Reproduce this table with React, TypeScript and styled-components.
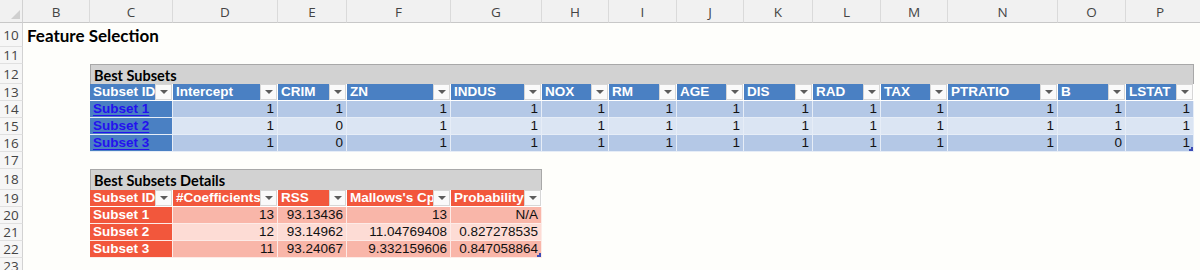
import React from 'react';
import styled, { createGlobalStyle } from 'styled-components';

// Sheet column widths: row numbers, B..P, rest
const COLS = '23px 67px 83px 105px 69px 104px 91px 67px 68px 67px 69px 68px 67px 110px 68px 68px 1fr';
const LETTERS = ['B', 'C', 'D', 'E', 'F', 'G', 'H', 'I', 'J', 'K', 'L', 'M', 'N', 'O', 'P'];

const GlobalStyle = createGlobalStyle`
  html, body {
    margin: 0;
    padding: 0;
    background: #fefefb;
  }
  * {
    box-sizing: border-box;
  }
`;

const Sheet = styled.div`
  width: 1200px;
  height: 270px;
  overflow: hidden;
  background: #fefefb;
  font-family: 'Liberation Sans', Arial, sans-serif;
`;

const SheetRow = styled.div<{ $h: number }>`
  display: grid;
  grid-template-columns: ${COLS};
  height: ${p => p.$h}px;
`;

const Corner = styled.div`
  background: #f1f1f1;
  border-right: 1px solid #d2d2d2;
  border-bottom: 1px solid #c8c8c8;
  display: flex;
  justify-content: flex-end;
  align-items: flex-end;
  padding: 0 2px 3px 0;
`;

const CornerMark = styled.div`
  width: 0;
  height: 0;
  border-left: 9px solid transparent;
  border-bottom: 9px solid #cfcfcf;
`;

const ColLetter = styled.div<{ $last?: boolean }>`
  background: #f1f1f1;
  border-right: ${p => (p.$last ? 'none' : '1px solid #dadada')};
  border-bottom: 1px solid #c8c8c8;
  color: #444;
  font-family: 'Open Sans', 'Liberation Sans', sans-serif;
  font-size: 13.5px;
  display: flex;
  align-items: center;
  justify-content: center;
  padding-top: 1px;
`;

const RowNum = styled.div`
  background: #f6f6f6;
  border-right: 1px solid #d2d2d2;
  border-bottom: 1px solid #e0e0e0;
  color: #444;
  font-family: 'Open Sans', 'Liberation Sans', sans-serif;
  font-size: 13.5px;
  display: flex;
  align-items: center;
  justify-content: center;
  overflow: hidden;
`;

const Gap = styled.div``;

const Title = styled.div`
  grid-column: span 6;
  font-family: Lato, 'Open Sans', sans-serif;
  font-weight: 700;
  font-size: 17px;
  color: #000;
  padding: 2px 0 0 4px;
  white-space: nowrap;
`;

const Caption = styled.div<{ $span: number }>`
  grid-column: span ${p => p.$span};
  background: #d2d2d2;
  border: 1px solid #a8a8a8;
  border-bottom: none;
  font-family: Lato, 'Open Sans', sans-serif;
  font-weight: 700;
  font-size: 14.5px;
  color: #000;
  padding: 2px 0 0 3px;
  white-space: nowrap;
`;

type Theme = 'blue' | 'red';

const palette = {
  blue: { head: '#4a80c3', dark: '#b4c8e6', light: '#dbe5f3', line: '#e6edf7' },
  red: { head: '#f2573c', dark: '#f9b6a9', light: '#fddcd5', line: '#fdebe7' },
};

const HeadCell = styled.div<{ $t: Theme }>`
  display: flex;
  align-items: stretch;
  background: ${p => palette[p.$t].head};
  border-right: 1px solid #fff;
  border-bottom: 1px solid #fff;
  overflow: hidden;
`;

const HeadLabel = styled.span`
  flex: 1;
  min-width: 0;
  overflow: hidden;
  white-space: nowrap;
  color: #fff;
  font-weight: 700;
  font-size: 13.5px;
  line-height: 16px;
  padding-left: 3px;
`;

const DropButton = styled.span`
  flex: 0 0 17px;
  background: #fafafa;
  border: 1px solid #d6d6d6;
  display: flex;
  align-items: center;
  justify-content: center;

  &::after {
    content: '';
    border-left: 4px solid transparent;
    border-right: 4px solid transparent;
    border-top: 4px solid #5c5c5c;
  }
`;

const IdCell = styled.div<{ $t: Theme }>`
  position: relative;
  background: ${p => palette[p.$t].head};
  border-right: 1px solid ${p => palette[p.$t].line};
  border-bottom: 1px solid ${p => palette[p.$t].line};
  font-weight: 700;
  font-size: 13.5px;
  line-height: 16px;
  padding-left: 3px;
  white-space: nowrap;
  color: #fff;
`;

const Link = styled.a`
  color: #2412ee;
  text-decoration: underline;
  text-decoration-thickness: 1px;
  text-underline-offset: 2px;
`;

const ValueCell = styled.div<{ $t: Theme; $alt: boolean }>`
  position: relative;
  background: ${p => (p.$alt ? palette[p.$t].light : palette[p.$t].dark)};
  border-right: 1px solid ${p => palette[p.$t].line};
  border-bottom: 1px solid ${p => palette[p.$t].line};
  color: #111;
  font-size: 13.5px;
  line-height: 16px;
  text-align: right;
  padding-right: 3px;
  white-space: nowrap;
`;

const ResizeMark = styled.span`
  position: absolute;
  right: 0;
  bottom: 0;
  width: 4px;
  height: 4px;
  border-right: 2px solid #3b4bb5;
  border-bottom: 2px solid #3b4bb5;
`;

const subsetCols = ['Intercept', 'CRIM', 'ZN', 'INDUS', 'NOX', 'RM', 'AGE', 'DIS', 'RAD', 'TAX', 'PTRATIO', 'B', 'LSTAT'];
const subsetRows = [
  { id: 'Subset 1', v: [1, 1, 1, 1, 1, 1, 1, 1, 1, 1, 1, 1, 1] },
  { id: 'Subset 2', v: [1, 0, 1, 1, 1, 1, 1, 1, 1, 1, 1, 1, 1] },
  { id: 'Subset 3', v: [1, 0, 1, 1, 1, 1, 1, 1, 1, 1, 1, 0, 1] },
];

const detailCols = ['#Coefficients', 'RSS', "Mallows's Cp", 'Probability'];
const detailRows = [
  { id: 'Subset 1', v: ['13', '93.13436', '13', 'N/A'] },
  { id: 'Subset 2', v: ['12', '93.14962', '11.04769408', '0.827278535'] },
  { id: 'Subset 3', v: ['11', '93.24067', '9.332159606', '0.847058864'] },
];

function Header({ t, label }: { t: Theme; label: string }) {
  return (
    <HeadCell $t={t}>
      <HeadLabel>{label}</HeadLabel>
      <DropButton />
    </HeadCell>
  );
}

export default function App() {
  return (
    <>
      <GlobalStyle />
      <Sheet>
        <SheetRow $h={23}>
          <Corner><CornerMark /></Corner>
          {LETTERS.map((l, i) => (
            <ColLetter key={l} $last={i === LETTERS.length - 1}>{l}</ColLetter>
          ))}
          <ColLetter $last />
        </SheetRow>

        <SheetRow $h={24}>
          <RowNum>10</RowNum>
          <Title>Feature Selection</Title>
        </SheetRow>
        <SheetRow $h={17}>
          <RowNum>11</RowNum>
        </SheetRow>

        {/* Best Subsets table */}
        <SheetRow $h={20}>
          <RowNum>12</RowNum>
          <Gap />
          <Caption $span={14}>Best Subsets</Caption>
        </SheetRow>
        <SheetRow $h={17}>
          <RowNum>13</RowNum>
          <Gap />
          <Header t="blue" label="Subset ID" />
          {subsetCols.map(c => <Header key={c} t="blue" label={c} />)}
        </SheetRow>
        {subsetRows.map((r, i) => (
          <SheetRow $h={17} key={r.id}>
            <RowNum>{14 + i}</RowNum>
            <Gap />
            <IdCell $t="blue"><Link>{r.id}</Link></IdCell>
            {r.v.map((v, j) => (
              <ValueCell key={j} $t="blue" $alt={i % 2 === 1}>
                {v}
                {i === subsetRows.length - 1 && j === r.v.length - 1 && <ResizeMark />}
              </ValueCell>
            ))}
          </SheetRow>
        ))}
        <SheetRow $h={17}>
          <RowNum>17</RowNum>
        </SheetRow>

        {/* Best Subsets Details table */}
        <SheetRow $h={21}>
          <RowNum>18</RowNum>
          <Gap />
          <Caption $span={5}>Best Subsets Details</Caption>
        </SheetRow>
        <SheetRow $h={17}>
          <RowNum>19</RowNum>
          <Gap />
          <Header t="red" label="Subset ID" />
          {detailCols.map(c => <Header key={c} t="red" label={c} />)}
        </SheetRow>
        {detailRows.map((r, i) => (
          <SheetRow $h={17} key={r.id}>
            <RowNum>{20 + i}</RowNum>
            <Gap />
            <IdCell $t="red">{r.id}</IdCell>
            {r.v.map((v, j) => (
              <ValueCell key={j} $t="red" $alt={i % 2 === 1}>
                {v}
                {i === detailRows.length - 1 && j === r.v.length - 1 && <ResizeMark />}
              </ValueCell>
            ))}
          </SheetRow>
        ))}
        <SheetRow $h={17}>
          <RowNum>23</RowNum>
        </SheetRow>
      </Sheet>
    </>
  );
}
